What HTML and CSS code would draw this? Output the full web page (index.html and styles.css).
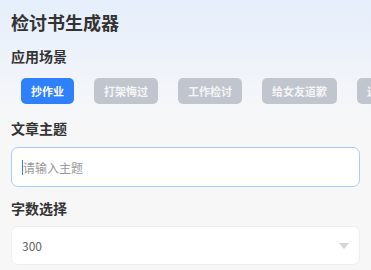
FILE: index.html
```html
<!DOCTYPE html>
<html lang="zh-CN">
<head>
  <meta charset="UTF-8">
  <meta name="viewport" content="width=device-width, initial-scale=1">
  <title>检讨书生成器</title>
  <link rel="stylesheet" href="styles.css">
</head>
<body>
  <h1 class="title">检讨书生成器</h1>

  <div class="label">应用场景</div>
  <div class="chips">
    <span class="chip active">抄作业</span>
    <span class="chip">打架悔过</span>
    <span class="chip">工作检讨</span>
    <span class="chip">给女友道歉</span>
    <span class="chip">迟到早退</span>
  </div>

  <div class="label">文章主题</div>
  <div class="field focus">
    <span class="caret"></span>
    <span class="placeholder">请输入主题</span>
  </div>

  <div class="label">字数选择</div>
  <div class="field select">
    <span class="value">300</span>
    <span class="arrow"></span>
  </div>
</body>
</html>
```

FILE: styles.css
```css
html, body {
  margin: 0;
  height: 100%;
}
body {
  font-family: "Noto Sans CJK SC", "Noto Sans", sans-serif;
  background: linear-gradient(#e5eefb 0, #f4f6f9 100px, #f7f7f7 135px);
  background-color: #f7f7f7;
  padding: 10px 11px 0;
  box-sizing: border-box;
  overflow: hidden;
  color: #333;
}
.title {
  margin: 0;
  font-size: 18px;
  line-height: 24px;
  font-weight: bold;
  color: #333;
}
.label {
  font-size: 14px;
  line-height: 20px;
  font-weight: bold;
  color: #333;
  margin: 12px 0 8px;
}
.chips {
  display: flex;
  gap: 20px;
  padding: 4px 10px 0;
  white-space: nowrap;
  overflow: hidden;
  margin-right: -11px;
}
.chip {
  flex: none;
  height: 26px;
  line-height: 26px;
  padding: 0 10px;
  border-radius: 5px;
  font-size: 11px;
  font-weight: bold;
  background: #c1c5cd;
  color: #f4f5f7;
}
.chip.active {
  background: #2f80fb;
  color: #fff;
}
.chips + .label {
  margin-top: 14px;
  margin-bottom: 9px;
}
.field {
  display: flex;
  align-items: center;
  height: 40px;
  padding: 0 10px;
  background: #fff;
  border: 1px solid #eeeeee;
  border-radius: 7px;
  box-sizing: border-box;
  font-size: 12px;
}
.field.focus {
  border-color: #a9cdfa;
}
.field + .label {
  margin-top: 11px;
}
.caret {
  width: 1px;
  height: 15px;
  background: #2f80fb;
}
.placeholder {
  color: #9a9a9a;
}
.select {
  height: 39px;
  justify-content: space-between;
}
.value {
  color: #666;
}
.arrow {
  width: 0;
  height: 0;
  border-left: 5px solid transparent;
  border-right: 5px solid transparent;
  border-top: 6px solid #d4d4d6;
}
```
